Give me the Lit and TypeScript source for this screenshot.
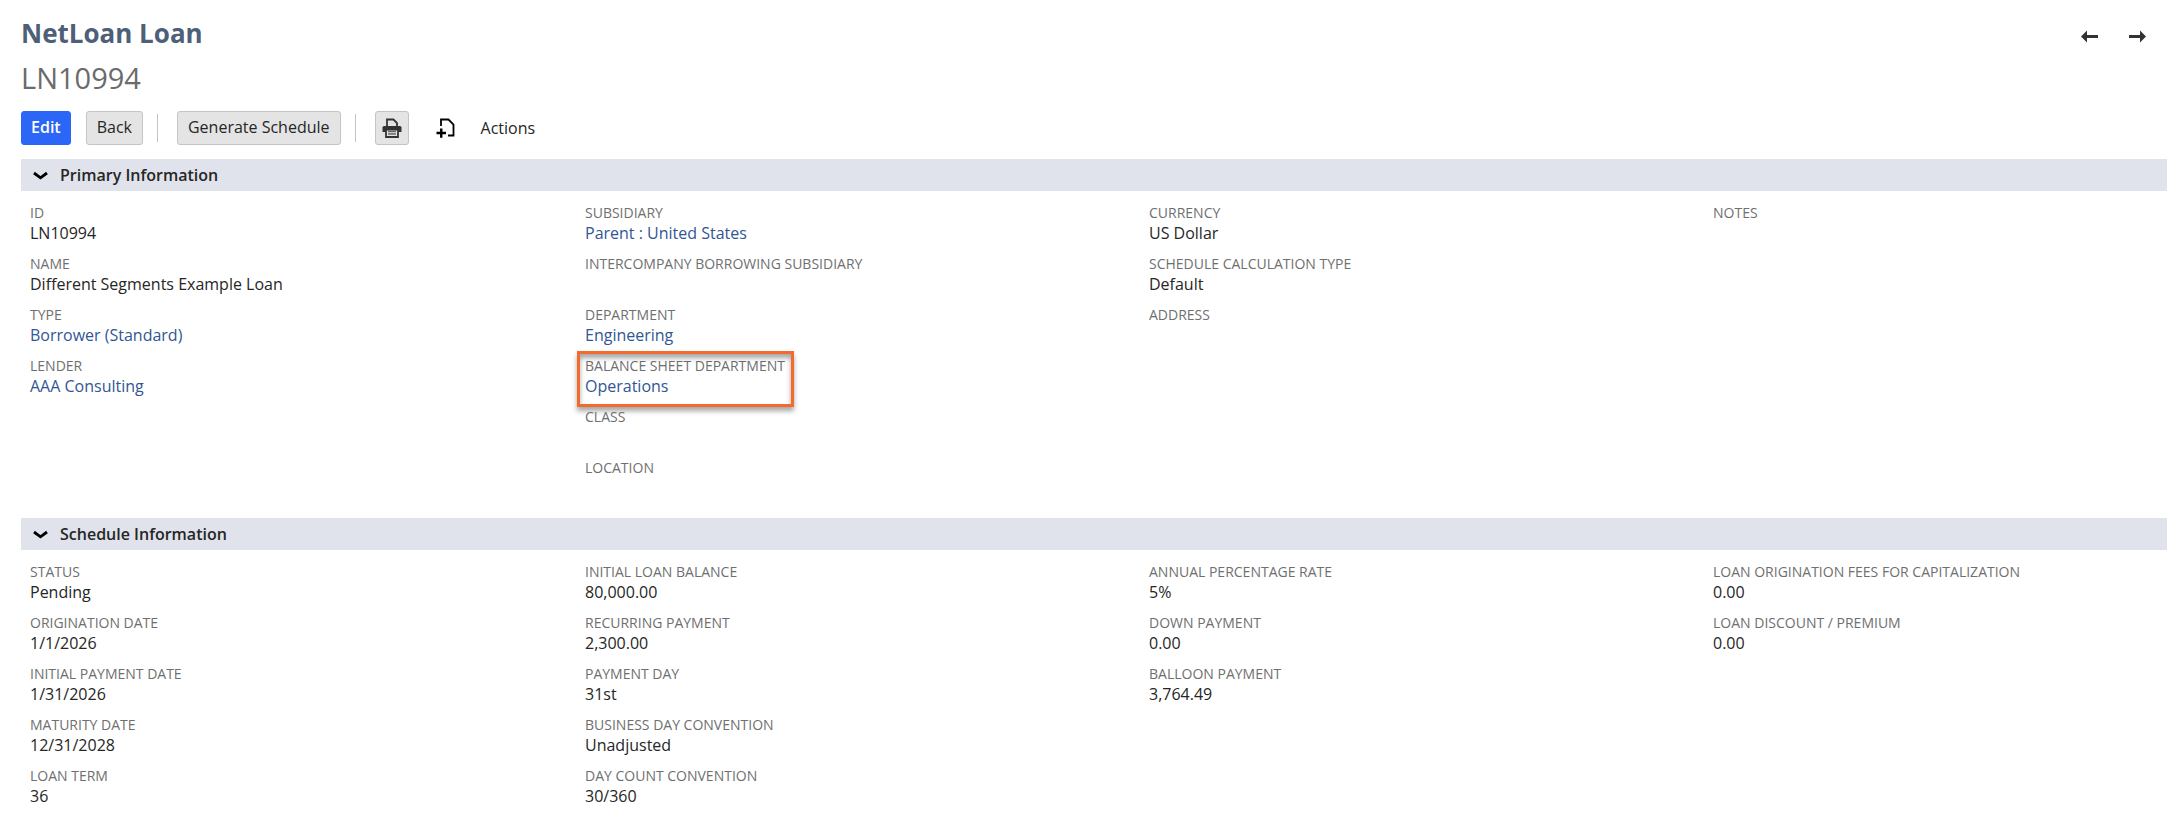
import { LitElement, html, css, svg, nothing } from "lit";
import { customElement, property, state } from "lit/decorators.js";
import { classMap } from "lit/directives/class-map.js";

interface Field {
  label: string;
  value?: string;
  link?: boolean;
  highlight?: boolean;
}

const PRIMARY: Field[][] = [
  [
    { label: "ID", value: "LN10994" },
    { label: "Name", value: "Different Segments Example Loan" },
    { label: "Type", value: "Borrower (Standard)", link: true },
    { label: "Lender", value: "AAA Consulting", link: true },
  ],
  [
    { label: "Subsidiary", value: "Parent : United States", link: true },
    { label: "Intercompany Borrowing Subsidiary" },
    { label: "Department", value: "Engineering", link: true },
    { label: "Balance Sheet Department", value: "Operations", link: true, highlight: true },
    { label: "Class" },
    { label: "Location" },
  ],
  [
    { label: "Currency", value: "US Dollar" },
    { label: "Schedule Calculation Type", value: "Default" },
    { label: "Address" },
  ],
  [{ label: "Notes" }],
];

const SCHEDULE: Field[][] = [
  [
    { label: "Status", value: "Pending" },
    { label: "Origination Date", value: "1/1/2026" },
    { label: "Initial Payment Date", value: "1/31/2026" },
    { label: "Maturity Date", value: "12/31/2028" },
    { label: "Loan Term", value: "36" },
  ],
  [
    { label: "Initial Loan Balance", value: "80,000.00" },
    { label: "Recurring Payment", value: "2,300.00" },
    { label: "Payment Day", value: "31st" },
    { label: "Business Day Convention", value: "Unadjusted" },
    { label: "Day Count Convention", value: "30/360" },
  ],
  [
    { label: "Annual Percentage Rate", value: "5%" },
    { label: "Down Payment", value: "0.00" },
    { label: "Balloon Payment", value: "3,764.49" },
  ],
  [
    { label: "Loan Origination Fees for Capitalization", value: "0.00" },
    { label: "Loan Discount / Premium", value: "0.00" },
  ],
];

@customElement("field-section")
export class FieldSection extends LitElement {
  @property() heading = "";
  @property({ attribute: false }) columns: Field[][] = [];
  @state() private open = true;

  static styles = css`
    :host {
      display: block;
    }
    .heading {
      margin: 0;
      font-size: 16px;
    }
    .toggle {
      display: flex;
      align-items: center;
      gap: 12px;
      width: 100%;
      height: 32px;
      padding: 0 11px;
      border: 0;
      background: #e0e3eb;
      color: #262626;
      font: inherit;
      font-weight: 600;
      text-align: left;
      cursor: pointer;
    }
    .chevron {
      flex: none;
      width: 16px;
      height: 16px;
    }
    .closed .chevron {
      transform: rotate(-90deg);
    }
    .grid {
      display: grid;
      grid-template-columns: 555fr 564fr 564fr 454fr;
      padding: 12px 0 19px 9px;
    }
    .column {
      display: flex;
      flex-direction: column;
      align-items: flex-start;
      gap: 10px;
      margin: 0;
    }
    .field {
      position: relative;
    }
    .label {
      color: #6f6f6f;
      font-size: 14px;
      line-height: 20px;
      text-transform: uppercase;
    }
    .value {
      min-height: 21px;
      margin: 0;
      color: #262626;
      font-size: 16px;
      line-height: 21px;
    }
    .link {
      color: #325694;
      text-decoration: none;
    }
    .link:hover {
      text-decoration: underline;
    }
    .highlight::after {
      content: "";
      position: absolute;
      inset: -5px -9px -10px -8px;
      border: 3px solid #f26b2c;
      box-shadow: 0 4px 5px rgba(0, 0, 0, 0.35), inset 0 4px 5px rgba(0, 0, 0, 0.35);
      pointer-events: none;
    }
  `;

  private renderField(f: Field) {
    return html`<div class=${classMap({ field: true, highlight: !!f.highlight })}>
      <dt class="label">${f.label}</dt>
      <dd class="value">
        ${f.link ? html`<a class="link" href="#">${f.value}</a>` : f.value ?? nothing}
      </dd>
    </div>`;
  }

  render() {
    return html`<section class=${this.open ? "" : "closed"}>
      <h2 class="heading">
        <button
          class="toggle"
          aria-expanded=${this.open ? "true" : "false"}
          @click=${() => (this.open = !this.open)}
        >
          <svg class="chevron" viewBox="0 0 16 16" aria-hidden="true">
            <path d="M2 6 L8.500 10.800 L15 6" fill="none" stroke="#000" stroke-width="2.800" />
          </svg>
          ${this.heading}
        </button>
      </h2>
      ${this.open
        ? html`<div class="grid">
            ${this.columns.map(
              (col) => html`<dl class="column">${col.map((f) => this.renderField(f))}</dl>`
            )}
          </div>`
        : nothing}
    </section>`;
  }
}

const arrow = (d: string) => svg`<path d=${d} fill="#333" />`;

@customElement("app-root")
export class AppRoot extends LitElement {
  static styles = css`
    :host {
      display: block;
      padding: 15px 0 0 21px;
      background: #fff;
      color: #262626;
      font-family: "Open Sans", "Noto Sans", sans-serif;
      font-size: 16px;
    }
    .top {
      display: flex;
      justify-content: space-between;
      align-items: flex-start;
      padding-right: 21px;
    }
    .title {
      margin: 0;
      color: #4d5f79;
      font-size: 26px;
      font-weight: 700;
      line-height: 36px;
    }
    .record {
      margin: 6px 0 0;
      color: #6b6b6b;
      font-size: 29px;
      font-weight: 400;
      line-height: 42px;
    }
    .pager {
      display: flex;
      gap: 31px;
      padding-top: 12px;
    }
    .pager-link {
      display: block;
      width: 17px;
      height: 18px;
    }
    .pager-icon,
    .icon {
      display: block;
    }
    .toolbar {
      display: flex;
      align-items: center;
      margin: 12px 0 14px;
    }
    .button {
      display: flex;
      align-items: center;
      justify-content: center;
      height: 34px;
      padding: 0 10px 2px;
      border: 1px solid #c4c4c4;
      border-radius: 3px;
      background: #e4e4e4;
      color: #262626;
      font: inherit;
      font-weight: 500;
      line-height: 22px;
      cursor: pointer;
    }
    .primary {
      margin-right: 15px;
      padding: 0 9px 2px;
      border-color: #2b66f6;
      background: #2b66f6;
      color: #fff;
      font-weight: 600;
    }
    .square {
      width: 34px;
      padding: 0;
    }
    .divider {
      width: 1px;
      height: 28px;
      margin: 0 19px 0 14px;
      background: #c4c4c4;
    }
    .plain {
      border: 0;
      background: none;
      padding: 0;
    }
    .add {
      margin: 0 25px 0 27px;
    }
  `;

  render() {
    return html`
      <header class="top">
        <div>
          <h1 class="title">NetLoan Loan</h1>
          <p class="record">LN10994</p>
        </div>
        <nav class="pager" aria-label="Records">
          <a class="pager-link" href="#" aria-label="Previous record">
            <svg class="pager-icon" width="17" height="18" viewBox="0 0 17 18">
              ${arrow("M0 9.500 L6 3.500 V8 H17 V11 H6 V15.500 Z")}
            </svg>
          </a>
          <a class="pager-link" href="#" aria-label="Next record">
            <svg class="pager-icon" width="17" height="18" viewBox="0 0 17 18">
              ${arrow("M17 9.500 L11 3.500 V8 H0 V11 H11 V15.500 Z")}
            </svg>
          </a>
        </nav>
      </header>

      <div class="toolbar" role="toolbar" aria-label="Record actions">
        <button class="button primary">Edit</button>
        <button class="button">Back</button>
        <span class="divider"></span>
        <button class="button">Generate Schedule</button>
        <span class="divider"></span>
        <button class="button square" aria-label="Print">
          <svg class="icon" width="20" height="20" viewBox="0 0 20 20">
            <path d="M5 8 V1.500 H11.500 L15 5 V8" fill="none" stroke="#333" stroke-width="1.800" />
            <path d="M2 8 H18 Q19.500 8 19.500 9.500 V14 H0.500 V9.500 Q0.500 8 2 8 Z" fill="#333" />
            <path d="M4 11.500 H16 V19 H4 Z" fill="#e4e4e4" stroke="#333" stroke-width="1.800" />
            <path d="M6 13.500 H14 M6 16 H14" stroke="#666" stroke-width="1.300" />
          </svg>
        </button>
        <button class="button plain add" aria-label="Add new">
          <svg class="icon" width="20" height="20" viewBox="0 0 20 20">
            <path
              d="M5 8 V1.500 H12.500 L17.500 6.500 V17.500 H12"
              fill="none"
              stroke="#000"
              stroke-width="1.800"
            />
            <path d="M0.500 15 H10 M5.250 10.500 V19.800" stroke="#000" stroke-width="2.400" />
          </svg>
        </button>
        <button class="button plain">Actions</button>
      </div>

      <field-section heading="Primary Information" .columns=${PRIMARY}></field-section>
      <field-section heading="Schedule Information" .columns=${SCHEDULE}></field-section>
    `;
  }
}
